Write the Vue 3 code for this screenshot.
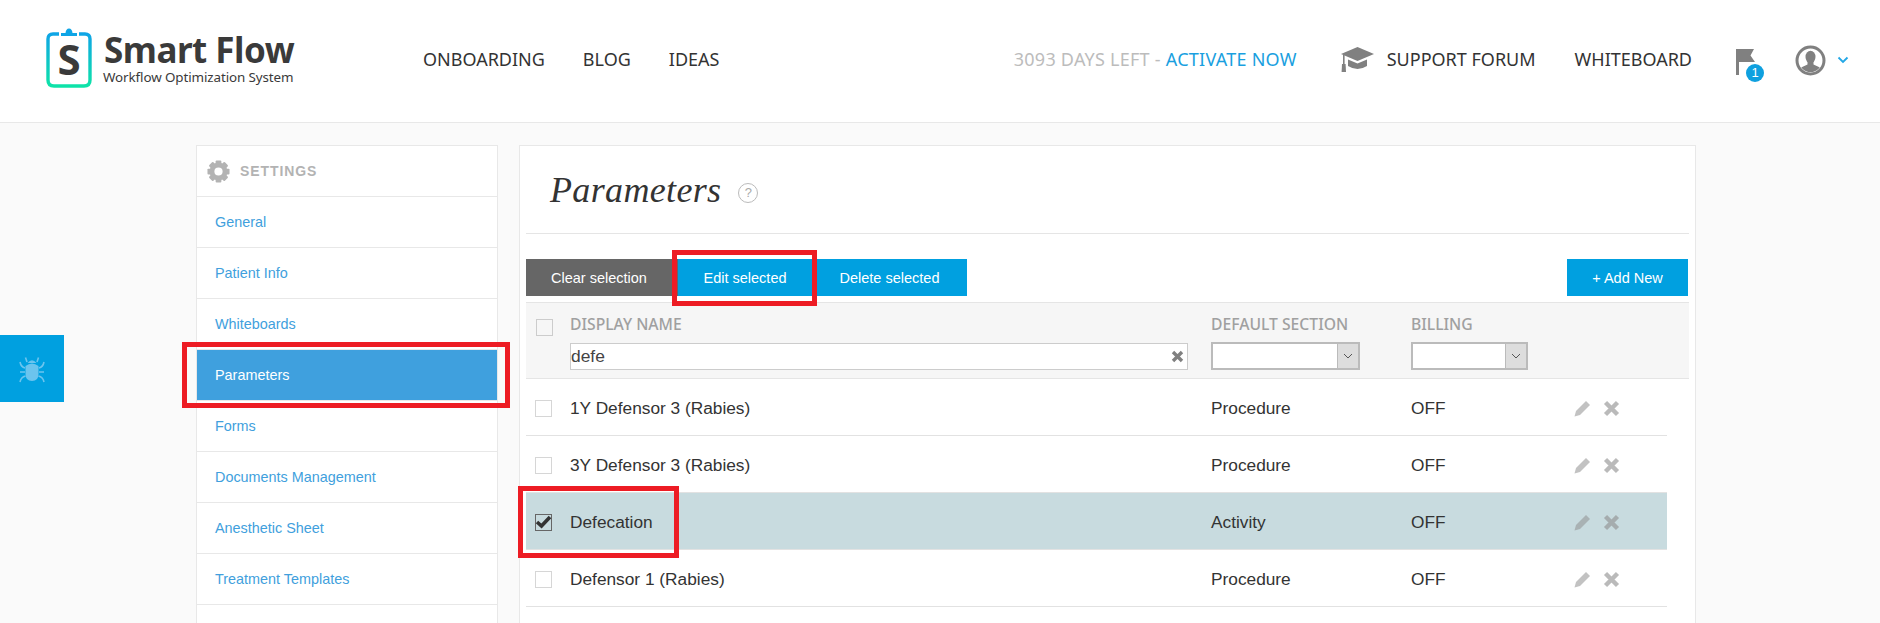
<script setup>
const settingsLinks = [
  { label: 'General' },
  { label: 'Patient Info' },
  { label: 'Whiteboards' },
  { label: 'Parameters', active: true },
  { label: 'Forms' },
  { label: 'Documents Management' },
  { label: 'Anesthetic Sheet' },
  { label: 'Treatment Templates' },
]

const parameters = [
  { name: '1Y Defensor 3 (Rabies)', section: 'Procedure', billing: 'OFF' },
  { name: '3Y Defensor 3 (Rabies)', section: 'Procedure', billing: 'OFF' },
  { name: 'Defecation', section: 'Activity', billing: 'OFF', selected: true },
  { name: 'Defensor 1 (Rabies)', section: 'Procedure', billing: 'OFF' },
]

const gearTeeth = [0, 45, 90, 135, 180, 225, 270, 315]
</script>

<template>
  <div class="app">
    <header class="topbar">
      <div class="logo">
        <div class="logo-mark">
          <svg width="46" height="60" viewBox="0 0 46 60">
            <defs>
              <linearGradient id="clip-grad" x1="0" y1="0" x2="0" y2="1">
                <stop offset="0" stop-color="#0fa5e6" />
                <stop offset="1" stop-color="#0de3a8" />
              </linearGradient>
            </defs>
            <path d="M13 6H7Q2 6 2 11V52Q2 58 8 58H38Q44 58 44 52V11Q44 6 39 6H33" fill="none" stroke="url(#clip-grad)" stroke-width="3.4" />
            <path d="M15 8V5H19.5Q20 0.5 23 0.5Q26 0.5 26.5 5H31V8Z" fill="#0fa5e6" />
          </svg>
          <span class="logo-s">S</span>
        </div>
        <div class="logo-text">
          <div class="logo-name">Smart Flow</div>
          <div class="logo-sub">Workflow Optimization System</div>
        </div>
      </div>

      <nav class="main-nav">
        <a>ONBOARDING</a>
        <a>BLOG</a>
        <a>IDEAS</a>
      </nav>

      <div class="right-nav">
        <div class="trial">3093 DAYS LEFT - <span class="activate">ACTIVATE NOW</span></div>
        <a class="forum">
          <svg width="33" height="26" viewBox="0 0 33 26">
            <path d="M16.5 1L33 8L16.5 15L0 8Z" fill="#808080" />
            <path d="M7 13.5L16.5 17.5L26 13.5V20Q16.5 26 7 20Z" fill="#808080" />
            <rect x="2" y="9" width="1.6" height="10" fill="#808080" />
            <path d="M1 18H4.6L5 26H0.6Z" fill="#808080" />
          </svg>
          SUPPORT FORUM
        </a>
        <a class="whiteboard">WHITEBOARD</a>
        <div class="flag">
          <svg width="20" height="26" viewBox="0 0 20 26">
            <rect x="0" y="0" width="3" height="26" fill="#808080" />
            <path d="M3 0H18L14.5 6.5L19 13H3Z" fill="#808080" />
          </svg>
          <span class="badge">1</span>
        </div>
        <div class="avatar">
          <svg width="31" height="31" viewBox="0 0 31 31">
            <defs>
              <clipPath id="avatar-clip"><circle cx="15.5" cy="15.5" r="11.5" /></clipPath>
            </defs>
            <circle cx="15.5" cy="15.5" r="13.5" fill="none" stroke="#808080" stroke-width="3" />
            <g clip-path="url(#avatar-clip)" fill="#808080">
              <ellipse cx="15.5" cy="12" rx="5" ry="6.2" />
              <path d="M12.5 17V19.5L5 23V31H26V23L18.5 19.5V17Z" />
            </g>
          </svg>
          <svg class="avatar-caret" width="12" height="8" viewBox="0 0 12 8">
            <path d="M1.5 1.5L6 6L10.5 1.5" fill="none" stroke="#22a7e6" stroke-width="1.8" />
          </svg>
        </div>
      </div>
    </header>

    <div class="bug-tab">
      <svg width="28" height="28" viewBox="0 0 28 28" fill="none" stroke="#6cc4ee" stroke-width="1.6">
        <path d="M7.5 11Q14 6 20.5 11V19Q20.5 26 14 26Q7.5 26 7.5 19Z" fill="#6cc4ee" stroke="none" />
        <path d="M9 7L7.5 2.5M19 7L20.5 2.5M7 13Q3 12 2 7M21 13Q25 12 26 7M7 17H2M21 17H26M7.5 21Q3 22 2 27M20.5 21Q25 22 26 27" />
        <path d="M9.5 8Q14 2.5 18.5 8Z" fill="#6cc4ee" stroke="none" />
      </svg>
    </div>

    <main class="content">
      <aside class="sidebar">
        <div class="sidebar-head">
          <svg width="23" height="23" viewBox="0 0 24 24">
            <rect
              v-for="deg in gearTeeth"
              :key="deg"
              x="9"
              y="0.5"
              width="6"
              height="6"
              rx="1"
              fill="#b3b3b3"
              :transform="`rotate(${deg} 12 12)`"
            />
            <circle cx="12" cy="12" r="6.8" fill="none" stroke="#b3b3b3" stroke-width="5" />
          </svg>
          <span>SETTINGS</span>
        </div>
        <a
          v-for="link in settingsLinks"
          :key="link.label"
          class="side-link"
          :class="{ active: link.active }"
        >
          {{ link.label }}
          <span v-if="link.active" class="mark mark-side"></span>
        </a>
      </aside>

      <section class="card">
        <div class="title-row">
          <h1>Parameters</h1>
          <span class="help">?</span>
        </div>

        <div class="toolbar">
          <button class="btn btn-dark">Clear selection</button>
          <button class="btn btn-edit">
            Edit selected
            <span class="mark mark-edit"></span>
          </button>
          <button class="btn btn-delete">Delete selected</button>
          <button class="btn btn-add">+ Add New</button>
        </div>

        <div class="table-head grid-cols">
          <div><span class="check head-check"></span></div>
          <div class="filter-name">
            <label>DISPLAY NAME</label>
            <div class="search-box">
              <input value="defe" />
              <svg width="13" height="13" viewBox="0 0 13 13">
                <path d="M2 2L11 11M11 2L2 11" stroke="#808080" stroke-width="3.4" />
              </svg>
            </div>
          </div>
          <div>
            <label>DEFAULT SECTION</label>
            <div class="select select-section">
              <span class="select-arrow">
                <svg width="10" height="6" viewBox="0 0 10 6">
                  <path d="M1 1L5 5L9 1" fill="none" stroke="#555" stroke-width="1" />
                </svg>
              </span>
            </div>
          </div>
          <div>
            <label>BILLING</label>
            <div class="select select-billing">
              <span class="select-arrow">
                <svg width="10" height="6" viewBox="0 0 10 6">
                  <path d="M1 1L5 5L9 1" fill="none" stroke="#555" stroke-width="1" />
                </svg>
              </span>
            </div>
          </div>
          <div></div>
        </div>

        <div
          v-for="row in parameters"
          :key="row.name"
          class="table-row grid-cols"
          :class="{ selected: row.selected }"
        >
          <div>
            <span class="check" :class="{ checked: row.selected }">
              <svg v-if="row.selected" width="17" height="15" viewBox="0 0 17 15">
                <path d="M2 8L6.5 12L15 3" fill="none" stroke="#333" stroke-width="3.6" />
              </svg>
            </span>
          </div>
          <div>{{ row.name }}</div>
          <div>{{ row.section }}</div>
          <div>{{ row.billing }}</div>
          <div class="actions">
            <svg width="17" height="17" viewBox="0 0 17 17">
              <path d="M12 1L16 5L6 15L0.5 16.5L2 11Z" fill="#8f8f8f" fill-opacity="0.55" />
            </svg>
            <svg width="17" height="17" viewBox="0 0 17 17">
              <path d="M2.5 2.5L14.5 14.5M14.5 2.5L2.5 14.5" stroke="#8f8f8f" stroke-opacity="0.62" stroke-width="4.4" />
            </svg>
          </div>
          <span v-if="row.selected" class="mark mark-row"></span>
        </div>
      </section>
    </main>
  </div>
</template>

<style>
html,
body {
  margin: 0;
  height: 100%;
  overflow: hidden;
  background: #fafafa;
}
</style>

<style scoped>
.app {
  position: relative;
  font-family: 'Liberation Sans', Arial, sans-serif;
  color: #333;
}

.topbar {
  display: flex;
  align-items: center;
  height: 122px;
  padding: 0 0 0 46px;
  background: #fff;
  border-bottom: 1px solid #e8e8e8;
  font-family: 'Noto Sans', sans-serif;
  font-size: 18px;
  color: #333;
}

.logo {
  display: flex;
  align-items: center;
  gap: 12px;
  width: 377px;
}

.logo-mark {
  position: relative;
  height: 60px;
  margin-top: -7px;
}

.logo-s {
  position: absolute;
  left: 0;
  right: 0;
  top: 4px;
  text-align: center;
  font-size: 42px;
  line-height: 54px;
  font-weight: 700;
  color: #3a3a3a;
}

.logo-text {
  margin-top: -6px;
  color: #3a3a3a;
}

.logo-name {
  font-size: 35px;
  line-height: 36px;
  font-weight: 700;
  letter-spacing: -0.5px;
}

.logo-sub {
  font-size: 13.4px;
  line-height: 16px;
  margin-left: -1px;
  margin-top: 1px;
  letter-spacing: -0.1px;
}

.main-nav {
  display: flex;
  gap: 38px;
  margin-bottom: 4px;
}

.right-nav {
  display: flex;
  align-items: center;
  margin-left: auto;
}

.trial {
  margin-bottom: 4px;
  letter-spacing: 0.25px;
  color: #bcbcbc;
}

.activate {
  color: #1a9fe0;
}

.forum {
  display: flex;
  align-items: center;
  gap: 13px;
  margin-left: 44px;
  margin-bottom: 4px;
}

.whiteboard {
  margin-left: 39px;
  margin-bottom: 4px;
}

.flag {
  position: relative;
  display: flex;
  margin-left: 44px;
  margin-top: 2px;
}

.badge {
  position: absolute;
  left: 10px;
  top: 15px;
  width: 18px;
  height: 18px;
  border-radius: 50%;
  background: #0fa0df;
  color: #fff;
  font-family: 'Liberation Sans', sans-serif;
  font-size: 13px;
  line-height: 18px;
  text-align: center;
}

.avatar {
  display: flex;
  align-items: center;
  gap: 11px;
  margin-left: 39px;
  margin-right: 31px;
  margin-top: -2px;
}

.bug-tab {
  position: absolute;
  left: 0;
  top: 335px;
  width: 64px;
  height: 67px;
  display: flex;
  align-items: center;
  justify-content: center;
  background: #00a0e0;
}

.content {
  display: flex;
  align-items: flex-start;
  gap: 21px;
  padding: 22px 0 0 196px;
}

.sidebar {
  width: 300px;
  min-height: 500px;
  flex: none;
  background: #fff;
  border: 1px solid #e8e8e8;
  border-bottom: 0;
}

.sidebar-head {
  display: flex;
  align-items: center;
  gap: 10px;
  height: 50px;
  padding-left: 10px;
  border-bottom: 1px solid #e8e8e8;
  font-size: 14px;
  font-weight: 700;
  letter-spacing: 0.9px;
  color: #b3b3b3;
}

.side-link {
  position: relative;
  display: flex;
  align-items: center;
  height: 50px;
  padding-left: 18px;
  border-bottom: 1px solid #e8e8e8;
  font-size: 14.4px;
  color: #419fdd;
}

.side-link.active {
  background: #3fa0de;
  color: #fff;
}

.mark {
  position: absolute;
  z-index: 2;
  border: 5px solid #ed1c24;
  pointer-events: none;
}

.mark-side {
  left: -15px;
  right: -13px;
  top: -8px;
  bottom: -8px;
}

.mark-edit {
  left: -6px;
  right: -5px;
  top: -9px;
  bottom: -10px;
}

.mark-row {
  left: -8px;
  top: -7px;
  bottom: -9px;
  width: 151px;
}

.card {
  width: 1163px;
  flex: none;
  padding: 0 6px 40px;
  background: #fff;
  border: 1px solid #e8e8e8;
}

.title-row {
  display: flex;
  align-items: center;
  gap: 17px;
  height: 87px;
  padding-left: 24px;
  border-bottom: 1px solid #e5e5e5;
}

h1 {
  margin: 0;
  font-family: 'Liberation Serif', 'Times New Roman', serif;
  font-style: italic;
  font-weight: 400;
  font-size: 36px;
  letter-spacing: 0.35px;
  color: #333;
}

.help {
  box-sizing: border-box;
  width: 20px;
  height: 20px;
  margin-top: 7px;
  border: 1px solid #bbb;
  border-radius: 50%;
  font-size: 13px;
  line-height: 18px;
  text-align: center;
  color: #aaa;
}

.toolbar {
  display: flex;
  margin-top: 25px;
  margin-bottom: 6px;
}

.btn {
  position: relative;
  height: 37px;
  padding: 0;
  border: 0;
  background: #00a0e0;
  color: #fff;
  font-family: inherit;
  font-size: 14.5px;
}

.btn-dark {
  width: 152px;
  padding-right: 6px;
  background: #666;
}

.btn-edit {
  width: 134px;
}

.btn-delete {
  width: 155px;
}

.btn-add {
  width: 121px;
  margin-left: auto;
  margin-right: 1px;
}

.grid-cols {
  display: grid;
  grid-template-columns: 44px 641px 200px 163px 1fr;
}

.table-head {
  height: 75px;
  background: #f6f6f6;
  border-top: 1px solid #e5e5e5;
  border-bottom: 1px solid #e5e5e5;
}

.table-head label {
  display: block;
  margin-top: 11px;
  margin-bottom: 7px;
  font-family: 'Noto Sans', sans-serif;
  font-size: 15.7px;
  line-height: 21px;
  font-weight: 500;
  color: #a0a0a0;
}

.check {
  display: block;
  box-sizing: border-box;
  width: 17px;
  height: 17px;
  margin-left: 9px;
  border: 1px solid #d6d6d6;
  background: #fff;
}

.head-check {
  margin-top: 16px;
  margin-left: 10px;
  background: transparent;
  border-color: #ccc;
}

.check.checked {
  border-color: #666;
  background: transparent;
}

.check svg {
  display: block;
  margin: -1px 0 0 -1px;
}

.filter-name {
  width: 618px;
}

.search-box {
  display: flex;
  align-items: center;
  box-sizing: border-box;
  height: 27px;
  margin-top: 8px;
  padding-right: 3px;
  background: #fff;
  border: 1px solid #ccc;
}

.search-box input {
  flex: 1;
  min-width: 0;
  padding: 0;
  border: 0;
  outline: 0;
  background: transparent;
  font-family: inherit;
  font-size: 17.4px;
  color: #444;
}

.select {
  display: flex;
  justify-content: flex-end;
  box-sizing: border-box;
  height: 28px;
  background: #fff;
  border: 2px solid #bbb;
}

.select-section {
  width: 149px;
}

.select-billing {
  width: 117px;
}

.select-arrow {
  display: flex;
  align-items: center;
  justify-content: center;
  width: 20px;
  background: #ddd;
  border-left: 1px solid #bbb;
}

.table-row {
  position: relative;
  align-items: center;
  width: 1141px;
  height: 54px;
  padding-top: 2px;
  border-bottom: 1px solid #e2e2e2;
  font-size: 17.3px;
  color: #333;
}

.table-row.selected {
  background: #c8dbdf;
}

.actions {
  display: flex;
  gap: 12px;
}
</style>
